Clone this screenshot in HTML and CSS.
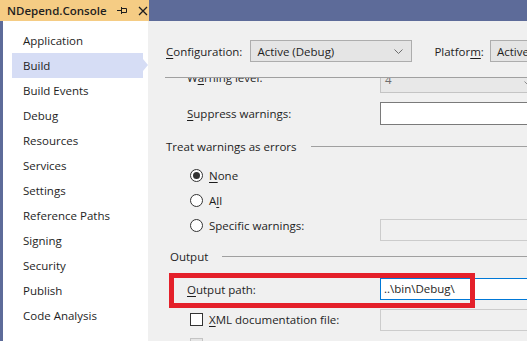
FILE: index.html
```html
<!DOCTYPE html>
<html lang="en">
<head>
  <meta charset="UTF-8" />
  <title>NDepend.Console - Build</title>
  <link rel="stylesheet" href="styles.css">
</head>
<body>

<div class="tabbar">
  <div class="tab">
    <span class="tab-title">NDepend.Console</span>
    <svg class="pin" width="11" height="9" viewBox="0 0 11 9">
      <path d="M0 4.5H4M4.5 1V8M4.5 2.5H9.5V6.5H4.5" fill="none" stroke="#1e1e1e" stroke-width="1"/>
    </svg>
    <svg class="close" width="10" height="10" viewBox="0 0 10 10">
      <path d="M1 1L9 9M9 1L1 9" stroke="#1e1e1e" stroke-width="1.3"/>
    </svg>
  </div>
</div>

<div class="window">
  <ul class="sidebar">
    <li>Application</li>
    <li class="active">Build</li>
    <li>Build Events</li>
    <li>Debug</li>
    <li>Resources</li>
    <li>Services</li>
    <li>Settings</li>
    <li>Reference Paths</li>
    <li>Signing</li>
    <li>Security</li>
    <li>Publish</li>
    <li>Code Analysis</li>
  </ul>

  <div class="content">
    <div class="config">
      <span class="config-label"><u>C</u>onfiguration:</span>
      <div class="combo combo-config">
        <span>Active (Debug)</span>
        <svg width="9" height="5" viewBox="0 0 9 5"><path d="M0.5 0.5L4.5 4.5L8.5 0.5" fill="none" stroke="#6d6d6d"/></svg>
      </div>
      <span class="config-label platform">Platfor<u>m</u>:</span>
      <div class="combo combo-platform"><span>Active (Any CPU)</span></div>
    </div>

    <div class="scroll">
      <div class="scroll-inner">
        <div class="row row-warning">
          <span class="label">W<u>a</u>rning level:</span>
          <div class="field combo-small">
            <span class="combo-value">4</span>
            <svg width="7" height="4" viewBox="0 0 7 4"><path d="M0.5 0.5L3.5 3.5L6.5 0.5" fill="none" stroke="#8a8a8a"/></svg>
          </div>
        </div>

        <div class="row row-suppress">
          <span class="label"><u>S</u>uppress warnings:</span>
          <div class="field textbox"></div>
        </div>

        <div class="group-title">
          <span>Treat warnings as errors</span>
          <span class="rule"></span>
        </div>

        <div class="row option">
          <span class="radio checked"></span>
          <span><u>N</u>one</span>
        </div>
        <div class="row option">
          <span class="radio"></span>
          <span>A<u>l</u>l</span>
        </div>
        <div class="row option option-specific">
          <span class="radio"></span>
          <span class="option-text">Specif<u>i</u>c warnings:</span>
          <div class="field textbox disabled"></div>
        </div>

        <div class="group-title output-title">
          <span>Output</span>
          <span class="rule"></span>
        </div>

        <div class="row row-output">
          <span class="label"><u>O</u>utput path:</span>
          <div class="field textbox focused">..\bin\Debug\</div>
          <div class="marker"></div>
        </div>

        <div class="row option option-xml">
          <span class="checkbox"></span>
          <span class="option-text"><u>X</u>ML documentation file:</span>
          <div class="field textbox disabled"></div>
        </div>

        <div class="row option">
          <span class="checkbox disabled"></span>
        </div>
      </div>
    </div>
  </div>
</div>

</body>
</html>
```

FILE: styles.css
```css
body {
  margin: 0;
  width: 527px;
  height: 341px;
  overflow: hidden;
  font-family: "Open Sans", "Noto Sans", sans-serif;
  font-size: 11.5px;
  color: #1e1e1e;
  background: #5d6b99;
}

u {
  text-decoration-thickness: 1px;
  text-underline-offset: 2px;
}

/* tab strip */
.tabbar {
  height: 21px;
  display: flex;
}

.tab {
  width: 149px;
  background: #f5cc84;
  display: flex;
  align-items: center;
  padding-left: 7px;
  box-sizing: border-box;
}

.tab-title {
  font-weight: 600;
  font-size: 11.5px;
}

.pin {
  margin-left: 10px;
}

.close {
  margin-left: 10px;
}

/* window */
.window {
  display: flex;
  height: 320px;
  border-left: 3px solid #5d6b99;
}

.sidebar {
  list-style: none;
  margin: 0;
  padding: 7px 0 0;
  width: 145px;
  background: #fff;
}

.sidebar li {
  height: 25px;
  line-height: 25px;
  margin-left: 9px;
  width: 131px;
  padding-left: 11px;
  box-sizing: border-box;
  position: relative;
}

.sidebar li.active {
  background: #d6ddf5;
}

.sidebar li.active::after {
  content: "";
  position: absolute;
  right: -5px;
  top: 6px;
  border-left: 5px solid #d6ddf5;
  border-top: 6px solid transparent;
  border-bottom: 6px solid transparent;
}

.content {
  flex: 1;
  background: #f0f0f0;
  overflow: hidden;
  display: flex;
  flex-direction: column;
}

/* configuration header */
.config {
  display: flex;
  align-items: center;
  margin-left: 17px;
  padding: 19px 0 15px 1px;
  border-bottom: 1px solid #a0a0a0;
  white-space: nowrap;
}

.combo {
  height: 22px;
  box-sizing: border-box;
  border: 1px solid #adadad;
  background: #e5e5e5;
  display: flex;
  align-items: center;
  justify-content: space-between;
  padding: 0 8px 0 6px;
  flex-shrink: 0;
}

.combo-config {
  width: 162px;
  margin-left: 8px;
}

.platform {
  margin-left: 22px;
}

.combo-platform {
  width: 140px;
  margin-left: 6px;
}

/* scrolled property page */
.scroll {
  flex: 1;
  overflow: hidden;
}

.scroll-inner {
  margin-top: -6px;
}

.row {
  display: flex;
  align-items: center;
  white-space: nowrap;
}

.label {
  width: 193px;
  padding-left: 39px;
  flex-shrink: 0;
}

.field {
  width: 160px;
  flex-shrink: 0;
  box-sizing: border-box;
}

.row-warning {
  height: 21px;
}

.row-warning .label {
  padding-bottom: 10px;
}

.combo-small {
  height: 21px;
  border: 1px solid #c4c4c4;
  background: #e8e8e8;
  display: flex;
  align-items: center;
  justify-content: space-between;
  padding: 0 8px 0 4px;
  color: #6d6d6d;
}

.combo-value {
  margin-bottom: 7px;
}

.row-suppress {
  margin-top: 9px;
  height: 23px;
}

.textbox {
  height: 23px;
  border: 1px solid #7a7a7a;
  background: #fff;
  padding: 0 3px;
  line-height: 21px;
}

.textbox.disabled {
  border-color: #cccccc;
  background: #f0f0f0;
  height: 22px;
}

.textbox.focused {
  border-color: #0078d7;
  height: 22px;
  line-height: 20px;
}

.group-title {
  display: flex;
  align-items: center;
  height: 16px;
  margin-top: 13px;
  padding-left: 18px;
}

.rule {
  flex: 1;
  border-top: 1px solid #a0a0a0;
  margin-left: 14px;
}

.output-title {
  padding-left: 22px;
  margin-top: 10px;
}

.option {
  height: 25px;
  padding-left: 42px;
}

.group-title + .option {
  margin-top: 9px;
}

.radio {
  width: 13px;
  height: 13px;
  box-sizing: border-box;
  border: 1px solid #333;
  border-radius: 50%;
  margin-right: 6px;
  flex-shrink: 0;
  display: flex;
  align-items: center;
  justify-content: center;
  background: #fff;
}

.radio.checked::after {
  content: "";
  width: 7px;
  height: 7px;
  border-radius: 50%;
  background: #333;
}

.option-text {
  width: 171px;
  flex-shrink: 0;
}

.option-specific .field {
  margin-top: 8px;
}

.row-output {
  position: relative;
  margin-top: 14px;
  height: 22px;
}

.marker {
  position: absolute;
  left: 21px;
  top: -5px;
  width: 306px;
  height: 35px;
  box-sizing: border-box;
  border: 5px solid #e4202a;
}

.checkbox {
  width: 13px;
  height: 13px;
  box-sizing: border-box;
  border: 1px solid #333;
  background: #fff;
  margin-right: 6px;
  flex-shrink: 0;
}

.checkbox.disabled {
  border-color: #c4c4c4;
  background: #e6e6e6;
}

.option-xml {
  margin-top: 7px;
}
```
